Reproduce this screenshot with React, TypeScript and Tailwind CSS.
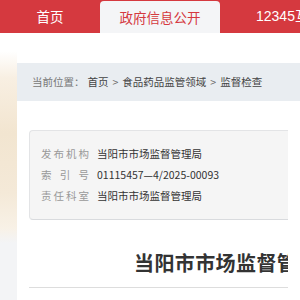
import { Fragment } from "react";

const crumbs = ["首页", "食品药品监管领域", "监督检查"];

const meta = [
  { label: "发布机构", value: "当阳市市场监督管理局" },
  { label: "索引号", value: "01115457—4/2025-00093" },
  { label: "责任科室", value: "当阳市市场监督管理局" },
];

const App = () => {
  return (
    <div
      className="h-[300px] w-[300px] overflow-hidden bg-white"
      style={{ fontFamily: '"Noto Sans CJK SC", "Noto Sans", sans-serif' }}
    >
      {/* top nav */}
      <div className="flex h-[33px] bg-[#d5393f] text-white">
        <div className="flex w-[100px] shrink-0 items-center justify-center text-[13.5px]">
          首页
        </div>
        <div className="mt-[1px] flex w-[120px] shrink-0 items-center justify-center rounded-t-[4px] bg-[#f4f5f7] text-[13.5px] text-[#d5393f]">
          政府信息公开
        </div>
        <div
          className="flex shrink-0 items-center whitespace-nowrap pl-[36px] text-[14px]"
          style={{ fontFamily: '"Liberation Sans", "Noto Sans CJK SC", sans-serif' }}
        >
          12345互动平台
        </div>
      </div>

      <div className="flex h-[267px]">
        {/* left decorative strip */}
        <div className="w-[17px] shrink-0 bg-[linear-gradient(180deg,#ffffff_0px,#ffffff_18px,#f8efe2_45px,#f2e5d0_100px,#f4e9d8_160px,#f8f1e6_195px,#f3f4f6_210px,#f3f4f6_100%)]" />

        <div className="min-w-0 flex-1 pt-[30px]">
          {/* breadcrumb */}
          <div className="flex h-[38px] items-center whitespace-nowrap bg-[#e9edf1] px-[15px] text-[10.5px] text-[#444]">
            <span className="text-[#777]">当前位置：</span>
            {crumbs.map((c, i) => (
              <Fragment key={c}>
                {i > 0 && <span className="mx-[4px] text-[#666]">&gt;</span>}
                <span className={i === 0 ? "ml-[3px]" : ""}>{c}</span>
              </Fragment>
            ))}
          </div>

          <div className="px-[12px] pt-[29px]">
            {/* meta box */}
            <div className="rounded-l-[4px] border border-r-0 border-[#e3e4e6] border-b-[#d9dbde] bg-[#f5f5f5] pb-[13px] pl-[11px] pt-[12px]">
              {meta.map((m) => (
                <div key={m.label} className="flex h-[21px] items-center whitespace-nowrap text-[10.5px]">
                  <span className="flex w-[48px] justify-between text-[#999]">
                    {m.label.split("").map((ch, i) => (
                      <span key={i}>{ch}</span>
                    ))}
                  </span>
                  <span className="ml-[8px] text-[#333]">{m.value}</span>
                </div>
              ))}
            </div>

            {/* title */}
            <div className="mt-[31px] border-b border-[#dddddd] pb-[12px]">
              <h1 className="overflow-hidden whitespace-nowrap pl-[105px] text-[20px] font-bold leading-[24px] tracking-[0.4px] text-[#333]">
                当阳市市场监督管理局关于食品安全监督抽检信息的通告
              </h1>
            </div>
          </div>
        </div>
      </div>
    </div>
  );
};

export default App;
